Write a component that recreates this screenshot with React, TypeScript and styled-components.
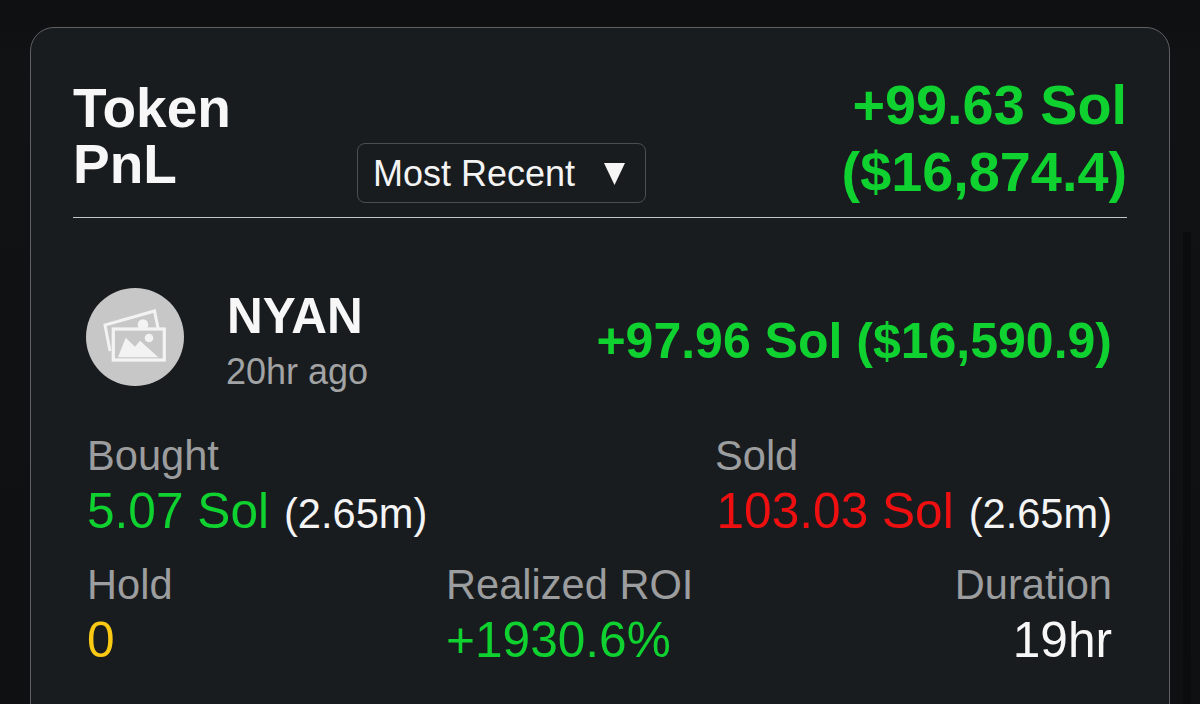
import React from "react";
import styled, { createGlobalStyle } from "styled-components";

const Global = createGlobalStyle`
  html, body { margin: 0; height: 704px; overflow: hidden; background: #0f1012; }
  body { font-family: "Liberation Sans", Arial, sans-serif; }
`;

const Page = styled.div`
  position: relative;
  height: 704px;
  overflow: hidden;
  padding: 27px 30px 0;
  box-sizing: border-box;
  background: linear-gradient(#0e0f11, #111214 60px, #0f1012);
`;

const Track = styled.div`
  position: absolute;
  left: 1183px;
  top: 232px;
  bottom: 0;
  width: 8px;
  background: #0b0c0d;
`;

const Card = styled.section`
  box-sizing: border-box;
  width: 1140px;
  height: 800px;
  padding: 52px 42px 0;
  background: #191c1f;
  border: 1.5px solid #5e6062;
  border-radius: 24px;
`;

const Header = styled.header`
  display: flex;
  align-items: flex-end;
  padding-bottom: 14px;
  border-bottom: 1.5px solid #c4c5c6;
`;

const Title = styled.h1`
  flex: 0 0 284px;
  margin: 0 0 11px;
  color: #f7f7f8;
  font-size: 55px;
  line-height: 56px;
  font-weight: 700;
`;

const Sort = styled.div`
  box-sizing: border-box;
  display: flex;
  align-items: center;
  justify-content: space-between;
  width: 289px;
  height: 60px;
  padding: 2px 20px 0 15px;
  border: 1.5px solid #4b4e51;
  border-radius: 8px;
  color: #f4f4f5;
  font-size: 36px;
`;

const Arrow = styled.svg`
  width: 21px;
  height: 22px;
  margin-top: -1px;
`;

const Total = styled.div`
  margin: -15px 0 -2px auto;
  text-align: right;
  color: #0fd12f;
  font-size: 55.8px;
  line-height: 67px;
  font-weight: 700;
`;

const Token = styled.article`
  padding: 0 15px 0 14px;
`;

const TokenHead = styled.div`
  display: flex;
  align-items: center;
  height: 98px;
  margin-top: 70px;
`;

const Avatar = styled.div`
  flex: none;
  display: flex;
  align-items: center;
  justify-content: center;
  width: 98px;
  height: 98px;
  margin-left: -1px;
  border-radius: 50%;
  background: #c8c7c7;
`;

const Identity = styled.div`
  margin: 6px 0 0 43px;
`;

const Name = styled.div`
  color: #f7f7f8;
  font-size: 49.5px;
  line-height: 56px;
  font-weight: 700;
`;

const Age = styled.div`
  margin: 7px 0 0 -1px;
  color: #a2a3a4;
  font-size: 36px;
  line-height: 42px;
`;

const Profit = styled.div`
  margin-left: auto;
  margin-top: 8px;
  color: #0fd12f;
  font-size: 50px;
  line-height: 60px;
  font-weight: 700;
`;

const TradeRow = styled.div`
  display: flex;
  justify-content: space-between;
  margin-top: 46px;
`;

const ResultRow = styled.div`
  display: grid;
  grid-template-columns: 359px 1fr auto;
  margin-top: 19px;
`;

const Stat = styled.div<{ $end?: boolean }>`
  text-align: ${(p) => (p.$end ? "right" : "left")};
`;

const Label = styled.div`
  color: #9c9d9e;
  font-size: 41.6px;
  line-height: 48px;
`;

const Value = styled.div<{ $color: string }>`
  margin-top: 3px;
  color: ${(p) => p.$color};
  font-size: 49.6px;
  line-height: 56px;
`;

const Amount = styled.span`
  margin-left: 15px;
  color: #f4f4f5;
  font-size: 41.6px;
`;

const SoldStat = styled.div`
  display: flex;
  flex-direction: column;
  width: 397px;
  ${Value} {
    align-self: flex-end;
  }
`;

const green = "#0fd12f";
const red = "#ee0f10";
const yellow = "#f9c913";
const white = "#f7f7f8";

function ImageIcon() {
  return (
    <svg width="64" height="60" viewBox="103 307 64 60" fill="none" aria-hidden="true">
      <path d="M110 351 L105 325 L154.5 311 L158 328" stroke="#f3f3f3" strokeWidth="3" />
      <circle cx="143" cy="324.5" r="5.3" fill="#f3f3f3" />
      <rect x="113.3" y="329" width="51" height="31" fill="#c8c7c7" stroke="#f3f3f3" strokeWidth="3.2" />
      <circle cx="149" cy="338" r="4.3" fill="#f3f3f3" />
      <path d="M118 357.3 L125.7 337.7 L135 346.7 L140 340.7 L158.3 357.3 Z" fill="#f3f3f3" />
    </svg>
  );
}

export default function App() {
  return (
    <Page>
      <Global />
      <Track />
      <Card>
        <Header>
          <Title>
            Token
            <br />
            PnL
          </Title>
          <Sort>
            Most Recent
            <Arrow viewBox="0 0 21 22" aria-hidden="true">
              <path d="M0 0 H21 L10.5 22 Z" fill="#f6f6f6" />
            </Arrow>
          </Sort>
          <Total>
            +99.63 Sol
            <br />
            ($16,874.4)
          </Total>
        </Header>
        <Token>
          <TokenHead>
            <Avatar>
              <ImageIcon />
            </Avatar>
            <Identity>
              <Name>NYAN</Name>
              <Age>20hr ago</Age>
            </Identity>
            <Profit>+97.96 Sol ($16,590.9)</Profit>
          </TokenHead>
          <TradeRow>
            <Stat>
              <Label>Bought</Label>
              <Value $color={green}>
                5.07 Sol<Amount>(2.65m)</Amount>
              </Value>
            </Stat>
            <SoldStat>
              <Label>Sold</Label>
              <Value $color={red}>
                103.03 Sol<Amount>(2.65m)</Amount>
              </Value>
            </SoldStat>
          </TradeRow>
          <ResultRow>
            <Stat>
              <Label>Hold</Label>
              <Value $color={yellow}>0</Value>
            </Stat>
            <Stat>
              <Label>Realized ROI</Label>
              <Value $color={green}>+1930.6%</Value>
            </Stat>
            <Stat $end>
              <Label>Duration</Label>
              <Value $color={white}>19hr</Value>
            </Stat>
          </ResultRow>
        </Token>
      </Card>
    </Page>
  );
}
